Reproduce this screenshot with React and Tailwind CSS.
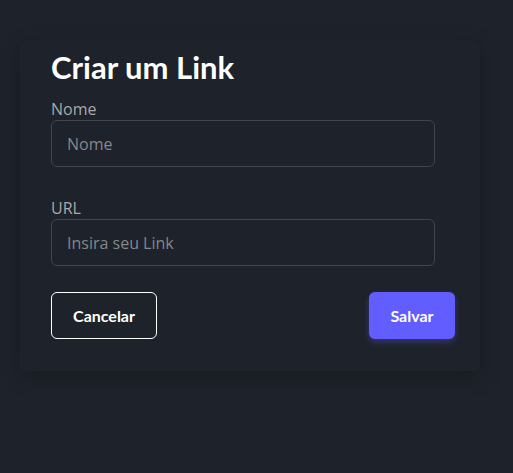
import React, { useState } from 'react';

export default function App() {
  const [name, setName] = useState('');
  const [url, setUrl] = useState('');

  return (
    <div
      className="min-h-screen w-full bg-[#1e222a] pt-[40px] pl-[20px]"
      style={{ fontFamily: '"Open Sans", sans-serif' }}
    >
      <div className="w-[460px] rounded-md bg-[#1e222a] px-[31px] pt-[7px] pb-[32px] shadow-[0_6px_22px_rgba(0,0,0,0.22)]">
        <h1 className="font-['Lato',sans-serif] text-[31px] font-bold leading-[40px] text-white">Criar um Link</h1>

        <form className="mt-[12px]">
          <label className="block text-[16px] leading-[20px] text-[#a8a8a8]">Nome</label>
          <input
            value={name}
            onChange={(e) => setName(e.target.value)}
            placeholder="Nome"
            className="mt-[1px] block h-[47px] w-96 rounded-md border border-[#41454d] bg-[#1e222a] px-[15px] text-[16px] text-white placeholder-[#85878b] outline-none"
          />

          <label className="mt-[31px] block text-[16px] leading-[20px] text-[#a8a8a8]">URL</label>
          <input
            value={url}
            onChange={(e) => setUrl(e.target.value)}
            placeholder="Insira seu Link"
            className="mt-[1px] block h-[47px] w-96 rounded-md border border-[#41454d] bg-[#1e222a] px-[15px] text-[16px] text-white placeholder-[#85878b] outline-none"
          />

          <div className="mt-[26px] flex w-[404px] items-center justify-between font-['Lato',sans-serif]">
            <button
              type="button"
              className="h-[47px] w-[106px] rounded-md border border-white text-[16px] font-bold text-white"
            >
              Cancelar
            </button>
            <button
              type="submit"
              className="h-[47px] w-[86px] rounded-md bg-[#625dff] text-[16px] font-bold text-white shadow-[0_3px_6px_rgba(98,93,255,0.35)]"
            >
              Salvar
            </button>
          </div>
        </form>
      </div>
    </div>
  );
}
